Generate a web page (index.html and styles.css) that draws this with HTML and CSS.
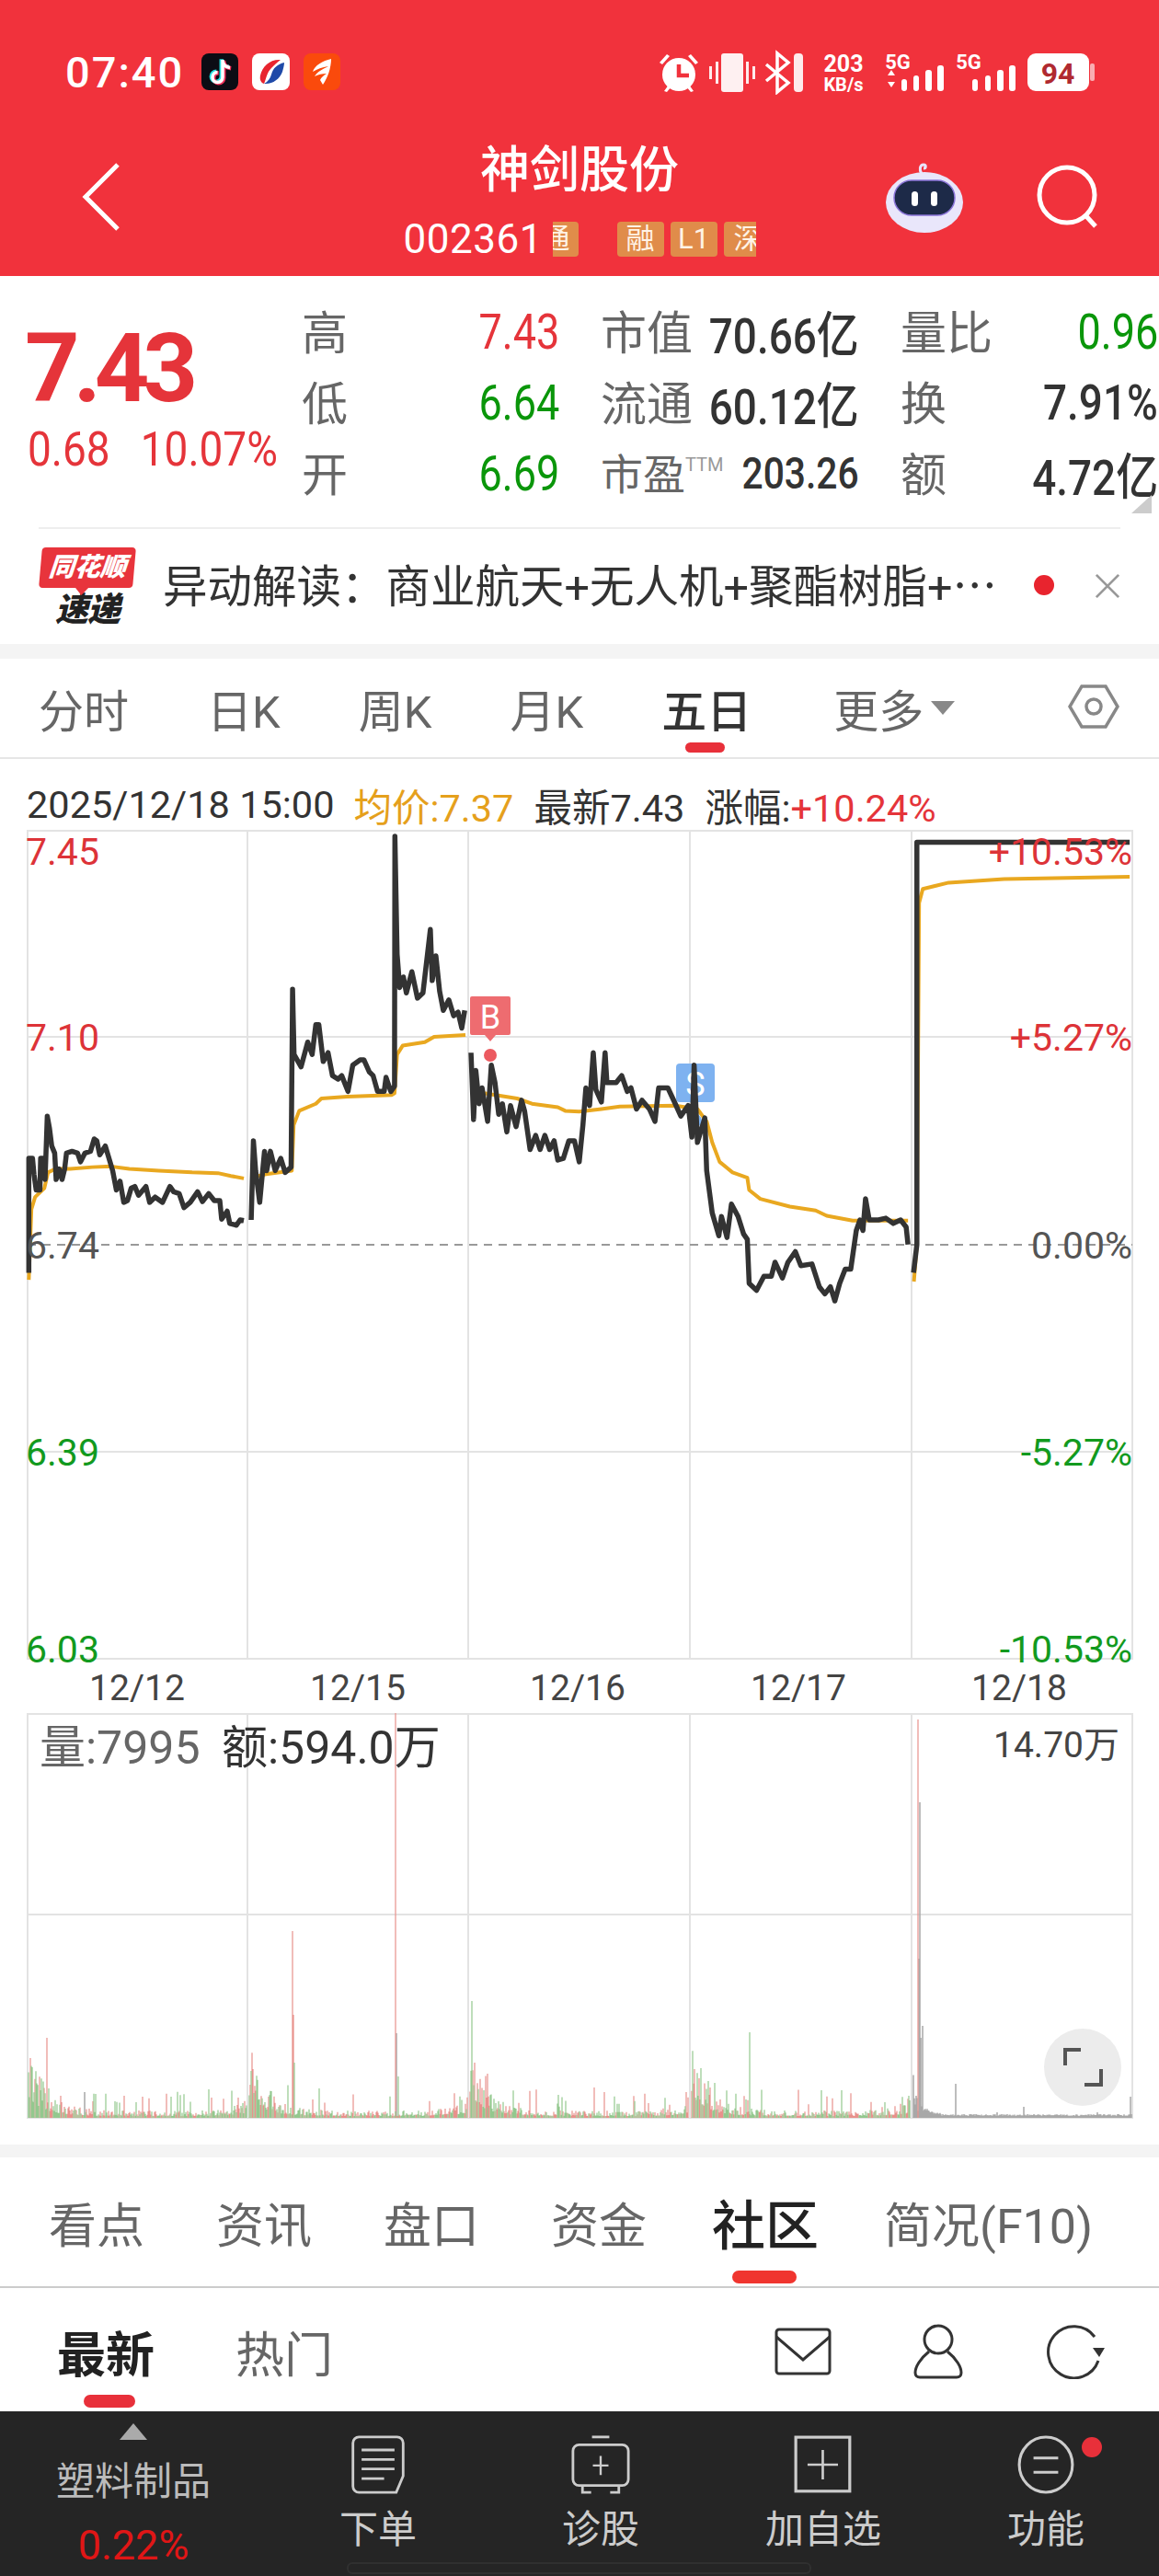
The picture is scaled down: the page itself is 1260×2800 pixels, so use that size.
FILE: index.html
```html
<!DOCTYPE html>
<html lang="zh-CN">
<head>
    <meta charset="UTF-8">
    <meta name="viewport" content="width=device-width, initial-scale=1.0">
    <title>神剑股份 002361</title>
    <link rel="stylesheet" href="styles.css">
</head>
<body>
<div class="app">

    <!-- Red header -->
    <header class="topbar">
        <div class="status">
            <div class="status-left">
                <span class="clock">07:40</span>
                <svg class="app-icon" viewBox="0 0 40 40"><rect width="40" height="40" rx="8" fill="#0c0c14"/><path d="M23 7v19a5.500 5.500 0 1 1-5.500-5.500M23 8c.5 4 3.500 7 8 7.500" fill="none" stroke="#25e0e0" stroke-width="4.500" transform="translate(-1.200 -.8)"/><path d="M23 7v19a5.500 5.500 0 1 1-5.500-5.500M23 8c.5 4 3.500 7 8 7.500" fill="none" stroke="#f0305a" stroke-width="4.500" transform="translate(1.200 .8)"/><path d="M23 7v19a5.500 5.500 0 1 1-5.500-5.500M23 8c.5 4 3.500 7 8 7.500" fill="none" stroke="#fff" stroke-width="3.500"/></svg>
                <svg class="app-icon wide" viewBox="0 0 41 40"><rect width="41" height="40" rx="8" fill="#fff"/><path d="M31 7C20 6 11 14 9 24c-1 5 1 8 4 9 3-7 3-12 8-17 3-3 6-6 10-9z" fill="#e8242e"/><path d="M35 10c-8 2-12 6-14 13-1 4-4 8-8 10 9 1 17-5 20-13 1-4 2-7 2-10z" fill="#1f4aa8"/></svg>
                <svg class="app-icon" viewBox="0 0 40 40"><rect width="40" height="40" rx="8" fill="#fa4a0c"/><path d="M30 6C21 8 12 13 10 20c5-3 10-5 17-6-6 3-12 6-15 11 4-2 8-3 13-3-3 2-6 4-7 7l3 5c5-7 9-18 9-28z" fill="#fff"/></svg>
            </div>
            <svg class="status-right" viewBox="710 52 485 50">
                <g fill="#fff">
                    <circle cx="738" cy="80" r="18"/>
                    <path d="M717 67l8-9 3 2-8 9zM759 67l-8-9-3 2 8 9zM722 98l5-7 3 2-5 6zM754 98l-5-7-3 2 5 6z"/>
                    <rect x="784" y="57" width="24" height="42" rx="3" opacity=".93"/>
                    <rect x="771" y="71" width="3" height="14" opacity=".9"/>
                    <rect x="778" y="66" width="3" height="24" opacity=".9"/>
                    <rect x="811" y="66" width="3" height="24" opacity=".9"/>
                    <rect x="818" y="71" width="3" height="14" opacity=".9"/>
                    <rect x="863" y="57" width="10" height="42" rx="4" opacity=".9"/>
                    <path d="M965 81l4-6 4 6zM965 88l4 6 4-6z"/>
                    <rect x="980" y="85" width="6" height="13" rx="3"/>
                    <rect x="993" y="81" width="6" height="17" rx="3"/>
                    <rect x="1006" y="75" width="7" height="23" rx="3"/>
                    <rect x="1019" y="70" width="7" height="28" rx="3"/>
                    <rect x="1057" y="85" width="6" height="13" rx="3"/>
                    <rect x="1071" y="81" width="6" height="17" rx="3"/>
                    <rect x="1084" y="75" width="7" height="23" rx="3"/>
                    <rect x="1097" y="70" width="7" height="28" rx="3"/>
                    <rect x="1117" y="57" width="67" height="41" rx="9"/>
                    <rect x="1185" y="68" width="5" height="19" rx="2" opacity=".6"/>
                </g>
                <path d="M738 69v12h11" fill="none" stroke="#f1323c" stroke-width="4.500"/>
                <path d="M833 69l24 20-12 10V57l12 10-24 20" fill="none" stroke="#fff" stroke-width="3.500"/>
                <text class="st-num" x="917" y="77" text-anchor="middle" font-size="25">203</text>
                <text class="st-num" x="917" y="98" text-anchor="middle" font-size="20">KB/s</text>
                <text class="st-num" x="976" y="74" text-anchor="middle" font-size="22">5G</text>
                <text class="st-num" x="1053" y="74" text-anchor="middle" font-size="22">5G</text>
                <text class="st-batt" x="1150" y="90" text-anchor="middle" font-size="32">94</text>
            </svg>
        </div>
        <div class="nav">
            <svg class="nav-back" viewBox="0 0 40 74"><path d="M38 2L3 37l35 35" fill="none" stroke="#fff" stroke-width="5"/></svg>
            <div class="nav-title">
                <div class="stock-name">神剑股份</div>
                <div class="stock-code">
                    <span class="code-num">002361</span>
                    <span class="tag tag-cut-left"><span>通</span></span>
                    <span class="tag first">融</span>
                    <span class="tag">L1</span>
                    <span class="tag tag-cut-right">深</span>
                </div>
            </div>
            <div class="nav-actions">
                <svg class="robot" viewBox="0 0 86 80">
                    <path d="M40 15c-3-4-2-10 2-10 3 0 3 4 0 4" fill="none" stroke="#e8e4ff" stroke-width="3"/>
                    <ellipse cx="43" cy="46" rx="42" ry="33" fill="#e9e6fb"/>
                    <rect x="10" y="22" width="66" height="38" rx="19" fill="#1d2a48" stroke="#8a74d8" stroke-width="1.500"/>
                    <rect x="29" y="34" width="7" height="16" rx="3.500" fill="#fff"/>
                    <rect x="50" y="34" width="7" height="16" rx="3.500" fill="#fff"/>
                </svg>
                <svg class="search" viewBox="0 0 72 72"><circle cx="34" cy="34" r="30" fill="none" stroke="#fff" stroke-width="5"/><path d="M54 56l11 12" stroke="#fff" stroke-width="5"/></svg>
            </div>
        </div>
    </header>

    <!-- Quote panel -->
    <section class="quote">
        <div class="price">
            <div class="price-big">7.43</div>
            <div class="price-sub"><span>0.68</span><span>10.07%</span></div>
        </div>
        <div class="stats">
            <div class="stat"><span class="lab">高</span><span class="val red">7.43</span></div>
            <div class="stat"><span class="lab">市值</span><span class="val dark">70.66亿</span></div>
            <div class="stat"><span class="lab">量比</span><span class="val green">0.96</span></div>
            <div class="stat"><span class="lab">低</span><span class="val green">6.64</span></div>
            <div class="stat"><span class="lab">流通</span><span class="val dark">60.12亿</span></div>
            <div class="stat"><span class="lab">换</span><span class="val dark">7.91%</span></div>
            <div class="stat"><span class="lab">开</span><span class="val green">6.69</span></div>
            <div class="stat"><span class="lab pe">市盈<small>TTM</small></span><span class="val dark pe-val">203.26</span></div>
            <div class="stat"><span class="lab">额</span><span class="val dark">4.72亿</span></div>
        </div>
        <span class="corner"></span>
    </section>
    <div class="rule"></div>

    <!-- News strip -->
    <section class="news">
        <div class="news-logo">
            <div class="logo-top">同花顺</div>
            <div class="logo-bottom">速递</div>
        </div>
        <div class="news-text">异动解读：商业航天+无人机+聚酯树脂+⋯</div>
        <span class="news-dot"></span>
        <svg class="news-close" viewBox="0 0 30 30"><path d="M2 2l26 26M28 2L2 28" stroke="#999" stroke-width="3"/></svg>
    </section>
    <div class="band"></div>

    <!-- Period tabs -->
    <nav class="periods">
        <span>分时</span>
        <span>日K</span>
        <span>周K</span>
        <span>月K</span>
        <span class="active">五日</span>
        <span class="more">更多<i></i></span>
        <svg class="hex" viewBox="0 0 56 50"><path d="M15 3h26l13 22-13 22H15L2 25z" fill="none" stroke="#888" stroke-width="3.500"/><circle cx="28" cy="25" r="8" fill="none" stroke="#888" stroke-width="3.500"/></svg>
    </nav>

    <div class="info">
        <span class="info-time">2025/12/18 15:00</span>
        <span class="info-avg">均价:7.37</span>
        <span class="info-new">最新7.43</span>
        <span class="info-rise">涨幅:<b>+10.24%</b></span>
    </div>

    <!-- Price chart, viewBox uses page coordinates -->
    <svg class="chart" viewBox="0 902 1260 960">
        <g stroke="#e3e3e3" stroke-width="2" fill="none">
            <path d="M30 903H1231V1803H30z"/>
            <path d="M30 1127H1231M30 1578H1231"/>
            <path d="M269 903V1803M509 903V1803M750 903V1803M991 903V1803"/>
        </g>
        <path d="M30 1353H1231" stroke="#999" stroke-width="2" stroke-dasharray="9 7"/>

        <rect x="735" y="1156" width="42" height="42" rx="4" fill="#7eb2f0"/>
        <text class="mark" x="756" y="1191" text-anchor="middle" font-size="36">S</text>
        <circle cx="756" cy="1218" r="7" fill="#7eb2f0"/>

        <!-- average line -->
        <g transform="translate(0 840) scale(.4016 .3827)" fill="none" stroke="#e9a820" stroke-width="4" stroke-linejoin="round">
            <path vector-effect="non-scaling-stroke" d="M78 1440L85 1240 95 1205 120 1180 130 1135 150 1125 190 1125 250 1120 300 1118 350 1125 430 1130 520 1135 590 1137 625 1145 660 1152"/>
            <path vector-effect="non-scaling-stroke" d="M680 1150L720 1140 790 1130 795 1000 810 960 855 940 870 925 940 920 1060 915 1068 910 1075 800 1090 775 1150 765 1175 750 1260 745"/>
            <path vector-effect="non-scaling-stroke" d="M1310 910L1400 925 1440 940 1510 950 1530 960 1568 962 1628 955 1678 948 1828 945 1888 955 1913 990 1928 1050 1948 1105 1983 1135 2023 1150 2028 1185 2058 1210 2138 1232 2208 1243 2238 1258 2308 1272 2458 1272"/>
            <path vector-effect="non-scaling-stroke" d="M2474 1445L2482 1340 2488 370 2498 330 2568 312 2718 302 3058 295"/>
        </g>
        <!-- price line -->
        <g transform="translate(0 840) scale(.4016 .3827)" fill="none" stroke="#333" stroke-width="5.500" stroke-linejoin="round">
            <path vector-effect="non-scaling-stroke" d="M78 1420L78 1095 88 1095 92 1140 98 1185 108 1185 110 1095 118 1095 122 1155 128 975 134 1010 140 1060 148 1080 152 1155 160 1125 168 1155 175 1125 180 1080 195 1075 210 1080 218 1105 230 1080 245 1075 255 1040 262 1045 270 1085 285 1060 295 1095 305 1130 315 1185 325 1160 335 1220 345 1215 355 1180 365 1175 375 1200 395 1175 405 1220 420 1205 440 1220 460 1175 470 1190 485 1195 498 1235 515 1220 535 1190 548 1218 565 1195 580 1215 595 1215 600 1268 615 1245 622 1280 640 1285 650 1270 660 1272"/>
            <path vector-effect="non-scaling-stroke" d="M680 1270L686 1045 692 1130 703 1220 716 1075 722 1130 732 1075 745 1130 760 1095 772 1135 788 1120 792 615 796 800 815 835 833 765 845 800 855 715 863 715 875 820 888 795 900 860 915 870 925 860 942 905 955 830 975 815 985 815 1000 850 1010 860 1022 905 1040 905 1045 865 1058 905 1068 890 1069 180 1075 515 1082 610 1092 580 1100 625 1115 565 1130 640 1145 625 1165 445 1170 590 1180 520 1190 620 1200 675 1215 645 1228 690 1240 680 1250 725 1258 675"/>
            <path vector-effect="non-scaling-stroke" d="M1275 795L1282 985 1288 845 1297 940 1305 895 1320 990 1330 830 1340 880 1350 970 1360 940 1372 1020 1382 945 1397 1005 1412 930 1420 960 1435 1070 1450 1030 1462 1070 1475 1030 1488 1070 1500 1045 1510 1100 1525 1095 1540 1045 1555 1045 1568 1105 1578 1000 1586 895 1596 945 1606 795 1613 900 1628 935 1638 795 1643 880 1668 880 1683 860 1698 905 1708 895 1723 955 1738 930 1758 955 1773 990 1783 895 1808 895 1828 940 1843 975 1863 945 1873 1035 1879 830 1888 1050 1908 980 1913 1130 1928 1250 1946 1315 1953 1260 1968 1320 1980 1225 1998 1260 2013 1310 2023 1325 2028 1450 2048 1470 2068 1430 2088 1430 2098 1390 2118 1435 2133 1390 2153 1360 2168 1400 2198 1395 2218 1460 2233 1480 2248 1460 2260 1500 2273 1450 2288 1410 2303 1410 2318 1300 2328 1270 2336 1300 2343 1210 2353 1270 2378 1270 2398 1265 2418 1280 2438 1270 2453 1290 2458 1340"/>
            <path vector-effect="non-scaling-stroke" d="M2473 1420L2482 1340 2482 197 3058 197"/>
        </g>

        <path d="M513 1083h40a2 2 0 0 1 2 2v38a2 2 0 0 1-2 2h-14l-6 7-6-7h-14a2 2 0 0 1-2-2v-38a2 2 0 0 1 2-2z" fill="#ee6c70"/>
        <text class="mark" x="533" y="1118" text-anchor="middle" font-size="36">B</text>
        <circle cx="533" cy="1147" r="7" fill="#ec5a60"/>

        <g class="axis">
            <text class="ax-red" x="28" y="940">7.45</text>
            <text class="ax-red" x="28" y="1142">7.10</text>
            <text class="ax-gray" x="28" y="1368">6.74</text>
            <text class="ax-green" x="28" y="1593">6.39</text>
            <text class="ax-green" x="28" y="1807">6.03</text>
            <text class="ax-red" x="1231" y="940" text-anchor="end">+10.53%</text>
            <text class="ax-red" x="1231" y="1142" text-anchor="end">+5.27%</text>
            <text class="ax-gray" x="1231" y="1368" text-anchor="end">0.00%</text>
            <text class="ax-green" x="1231" y="1593" text-anchor="end">-5.27%</text>
            <text class="ax-green" x="1231" y="1807" text-anchor="end">-10.53%</text>
        </g>
        <g class="dates" text-anchor="middle">
            <text x="149" y="1848">12/12</text>
            <text x="389" y="1848">12/15</text>
            <text x="628" y="1848">12/16</text>
            <text x="868" y="1848">12/17</text>
            <text x="1108" y="1848">12/18</text>
        </g>
    </svg>

    <!-- Volume chart -->
    <svg class="vol" viewBox="0 1862 1260 469">
        <g stroke="#e3e3e3" stroke-width="2" fill="none">
            <path d="M30 1863H1231V2302H30z"/>
            <path d="M30 2081H1231"/>
            <path d="M269 1863V2302M509 1863V2302M750 1863V2302M991 1863V2302"/>
        </g>
        <path id="volGray" stroke="#a8a8a8" stroke-width="1.500" fill="none"/>
        <path id="volRed" stroke="#e8918c" stroke-width="1.200" fill="none"/>
        <path id="volGreen" stroke="#93c88e" stroke-width="1.200" fill="none"/>
        <text class="vol-lab" x="43" y="1917">量:7995</text>
        <text class="vol-amt" x="241" y="1917">额:594.0万</text>
        <text class="vol-max" x="1217" y="1910" text-anchor="end">14.70万</text>
        <circle cx="1177" cy="2247" r="42" fill="#ececec"/>
        <path d="M1175 2228h-17v17M1179 2266h18v-17" fill="none" stroke="#555" stroke-width="4"/>
    </svg>
    <div class="band thin"></div>

    <!-- Content tabs -->
    <nav class="content-tabs">
        <span>看点</span>
        <span>资讯</span>
        <span>盘口</span>
        <span>资金</span>
        <span class="active">社区</span>
        <span>简况(F10)</span>
    </nav>

    <div class="sub-tabs">
        <span class="active">最新</span>
        <span>热门</span>
        <div class="sub-icons">
            <svg class="ic-mail" viewBox="0 0 62 52"><rect x="2" y="2" width="58" height="48" rx="3" fill="none" stroke="#333" stroke-width="3"/><path d="M2 10l29 25L60 10" fill="none" stroke="#333" stroke-width="3"/></svg>
            <svg class="ic-user" viewBox="0 0 56 60"><ellipse cx="28" cy="17" rx="15" ry="15" fill="none" stroke="#333" stroke-width="3"/><path d="M18 30C8 38 3 47 3 53c0 3 2 5 5 5h40c3 0 5-2 5-5 0-6-5-15-15-23" fill="none" stroke="#333" stroke-width="3"/></svg>
            <svg class="ic-refresh" viewBox="0 0 64 60"><path d="M52 14A28 28 0 1 0 56 40" fill="none" stroke="#333" stroke-width="3"/><path d="M50 26h13l-6 10z" fill="#333"/></svg>
        </div>
    </div>

    <!-- Bottom bar -->
    <footer class="bottom">
        <div class="sector">
            <i class="sector-up"></i>
            <span class="sector-name">塑料制品</span>
            <span class="sector-pct">0.22%</span>
        </div>
        <div class="cell">
            <svg viewBox="0 0 62 68"><path d="M9 2h44a7 7 0 0 1 7 7v38l-8 19H9a7 7 0 0 1-7-7V9a7 7 0 0 1 7-7z" fill="none" stroke="#ccc" stroke-width="3"/><path d="M12 17h38M12 28h38M12 39h38M12 50h26" stroke="#ccc" stroke-width="3"/></svg>
            <span>下单</span>
        </div>
        <div class="cell">
            <svg viewBox="0 0 68 68"><path d="M24 2h20" stroke="#ccc" stroke-width="3"/><rect x="2" y="11" width="64" height="47" rx="7" fill="none" stroke="#ccc" stroke-width="3"/><path d="M34 24v22M25 35h18" stroke="#ccc" stroke-width="2.500"/><path d="M13 59v7h10M55 59v7H45" stroke="#ccc" stroke-width="3" fill="none"/></svg>
            <span>诊股</span>
        </div>
        <div class="cell">
            <svg viewBox="0 0 60 60"><rect x="2" y="2" width="55" height="55" fill="none" stroke="#ccc" stroke-width="3"/><path d="M29.500 15v30M14 30h31" stroke="#ccc" stroke-width="2.500"/></svg>
            <span>加自选</span>
        </div>
        <div class="cell">
            <svg viewBox="0 0 60 62"><ellipse cx="30" cy="31" rx="28" ry="29" fill="none" stroke="#ccc" stroke-width="3"/><path d="M17 24h26M17 39h26" stroke="#ccc" stroke-width="3"/></svg>
            <span>功能</span>
            <i class="cell-dot"></i>
        </div>
        <div class="home-bar"></div>
    </footer>
</div>
<script src="chart.js"></script>
</body>
</html>
```

FILE: styles.css
```css
body {
    margin: 0;
    background: #fff;
    font-family: Roboto, "Noto Sans CJK SC", sans-serif;
    color: #333;
}
.app {
    width: 1260px;
    height: 2800px;
    overflow: hidden;
}

/* header */
.topbar {
    height: 300px;
    background: #f1323c;
    color: #fff;
}
.status {
    height: 152px;
    box-sizing: border-box;
    padding: 4px 0 0 71px;
    display: flex;
    align-items: center;
    justify-content: space-between;
}
.status-left {
    display: flex;
    align-items: center;
}
.clock {
    font-size: 47px;
    letter-spacing: 2px;
    font-weight: 500;
    width: 148px;
}
.app-icon {
    width: 40px;
    height: 40px;
    margin-right: 15px;
}
.app-icon.wide {
    width: 41px;
}
.status-right {
    width: 485px;
    height: 50px;
    margin-right: 65px;
}
.st-num {
    fill: #fff;
    font-weight: 700;
}
.st-batt {
    fill: #b02a30;
    font-weight: 700;
}
.nav {
    display: grid;
    grid-template-columns: 1fr auto 1fr;
    align-items: center;
    height: 130px;
}
.nav-back {
    width: 42px;
    height: 74px;
    margin: -6px 0 0 89px;
}
.nav-title {
    text-align: center;
}
.stock-name {
    font-size: 54px;
    line-height: 68px;
    font-weight: 500;
}
.stock-code {
    display: flex;
    align-items: center;
    margin-top: 18px;
    height: 44px;
}
.code-num {
    width: 146px;
    font-size: 44px;
    letter-spacing: 0.5px;
    margin-right: 16px;
}
.tag {
    width: 51px;
    height: 38px;
    line-height: 38px;
    background: #e08c4a;
    border-radius: 4px;
    font-size: 31px;
    text-align: center;
    margin-right: 7px;
    color: #fff3e6;
    overflow: hidden;
}
.tag.first {
    margin-left: 35px;
}
.tag-cut-left {
    width: 28px;
    border-radius: 0 4px 4px 0;
    margin-right: 7px;
    position: relative;
}
.tag-cut-left span {
    position: absolute;
    right: 9px;
    top: 0;
}
.tag-cut-right {
    width: 35px;
    border-radius: 4px 0 0 4px;
    margin-right: 0;
    text-align: left;
    text-indent: 11px;
    white-space: nowrap;
}
.nav-actions {
    display: flex;
    align-items: center;
    justify-content: flex-end;
    margin-top: -6px;
}
.robot {
    width: 86px;
    height: 80px;
}
.search {
    width: 72px;
    height: 72px;
    margin: 0 62px 0 78px;
}

/* quote */
.quote {
    display: flex;
    height: 273px;
    box-sizing: border-box;
    position: relative;
}
.price {
    width: 328px;
    box-sizing: border-box;
    padding: 46px 0 0 32px;
    flex-shrink: 0;
}
.price-big {
    color: #e5343a;
    font-size: 104px;
    line-height: 110px;
    font-weight: 700;
    letter-spacing: -7px;
    margin-left: -5px;
}
.price-sub {
    display: flex;
    gap: 33px;
    color: #e5343a;
    font-size: 46px;
    line-height: 54px;
    margin: 5px 0 0 -2px;
    transform: scaleY(1.12);
}
.stats {
    display: grid;
    grid-template-columns: 280px 281px 280px;
    column-gap: 45px;
    grid-auto-rows: 77px;
    padding-top: 21px;
}
.stat {
    display: flex;
    align-items: center;
    justify-content: space-between;
}
.lab {
    color: #666;
    font-size: 50px;
    padding-bottom: 4px;
    white-space: nowrap;
}
/* the app's digits are tall and narrow, margin takes back the width scaleX leaves */
.val {
    font-size: 53px;
    padding-top: 2px;
    margin-left: -40px;
    transform: scaleX(.85);
    transform-origin: right center;
    white-space: nowrap;
}
.val.dark {
    font-weight: 500;
    color: #333;
    font-size: 54px;
}
.red {
    color: #e5343a;
}
.green {
    color: #0a960a;
}
.lab.pe {
    font-size: 46px;
    display: flex;
    align-items: flex-start;
}
.lab.pe small {
    font-size: 20px;
    color: #999;
    margin-top: 14px;
}
.val.pe-val {
    font-size: 48px;
}
.corner {
    position: absolute;
    right: 8px;
    top: 238px;
    border-style: solid;
    border-width: 0 0 20px 22px;
    border-color: transparent transparent #ccc transparent;
}
.rule {
    height: 2px;
    margin: 0 42px;
    background: #eee;
}

/* news */
.news {
    display: flex;
    align-items: center;
    height: 125px;
    padding-left: 44px;
}
.news-logo {
    width: 102px;
    text-align: center;
    font-style: italic;
    font-weight: 900;
    flex-shrink: 0;
}
.logo-top {
    position: relative;
    height: 44px;
    line-height: 44px;
    background: #e8343c;
    color: #fff;
    font-size: 28px;
    border-radius: 4px;
    transform: skewX(-5deg);
    white-space: nowrap;
}
.logo-top::after {
    content: "";
    position: absolute;
    left: 40px;
    top: 44px;
    border-style: solid;
    border-width: 8px 7px 0 7px;
    border-color: #e8343c transparent transparent transparent;
}
.logo-bottom {
    font-size: 36px;
    line-height: 36px;
    margin-top: 6px;
    color: #222;
    letter-spacing: -1px;
}
.news-text {
    font-size: 48.500px;
    color: #333;
    margin: -8px 0 0 31px;
    width: 947px;
    white-space: nowrap;
    flex-shrink: 0;
}
.news-dot {
    width: 22px;
    height: 22px;
    border-radius: 50%;
    background: #e8242e;
    margin: -4px 0 0 0;
    flex-shrink: 0;
}
.news-close {
    width: 28px;
    height: 28px;
    margin: -2px 0 0 44px;
    flex-shrink: 0;
}
.band {
    height: 16px;
    background: #f4f4f4;
}
.band.thin {
    height: 14px;
}

/* period tabs */
.periods {
    position: relative;
    height: 109px;
    box-sizing: border-box;
    display: flex;
    align-items: center;
    gap: 85px;
    padding: 0 0 0 42px;
    border-bottom: 2px solid #e6e6e6;
    font-size: 49px;
    color: #666;
}
.periods .active {
    position: relative;
    color: #333;
    font-weight: 500;
}
.periods .active::after {
    content: "";
    position: absolute;
    left: 26px;
    top: 73px;
    width: 43px;
    height: 11px;
    background: #e8303a;
    border-radius: 6px;
}
.more {
    display: flex;
    align-items: center;
    margin-left: 4px;
}
.more i {
    margin-left: 8px;
    border-style: solid;
    border-width: 15px 13px 0 13px;
    border-color: #888 transparent transparent transparent;
}
.hex {
    position: absolute;
    right: 43px;
    top: 27px;
    width: 56px;
    height: 50px;
}
.info {
    height: 77px;
    box-sizing: border-box;
    padding: 22px 0 0 29px;
    display: flex;
    align-items: center;
    font-size: 41.500px;
    white-space: nowrap;
}
.info-avg {
    color: #e5a01c;
    margin-left: 21px;
}
.info-new {
    margin-left: 22px;
}
.info-rise {
    margin-left: 22px;
}
.info-rise b {
    font-weight: 400;
    color: #e5343a;
}

/* charts */
.chart,
.vol {
    display: block;
    width: 1260px;
}
.chart {
    height: 960px;
}
.vol {
    height: 469px;
}
.mark {
    fill: #fff;
}
.axis text {
    font-size: 41px;
}
.ax-red {
    fill: #dd3338;
}
.ax-gray {
    fill: #555;
}
.ax-green {
    fill: #129a1e;
}
.dates text {
    font-size: 39px;
    fill: #444;
}
.vol-lab {
    font-size: 50px;
    fill: #666;
}
.vol-amt {
    font-size: 50px;
    fill: #333;
}
.vol-max {
    font-size: 39px;
    fill: #444;
}

/* lower tabs */
.content-tabs {
    height: 142px;
    box-sizing: border-box;
    display: flex;
    align-items: center;
    gap: 78px;
    padding: 0 0 0 53px;
    border-bottom: 2px solid #ccc;
    font-size: 52px;
    color: #666;
    white-space: nowrap;
}
.content-tabs .active {
    position: relative;
    font-size: 58px;
    font-weight: 500;
    color: #222;
    margin: 0 -7px;
}
.content-tabs .active::after {
    content: "";
    position: absolute;
    left: 22px;
    top: 95px;
    width: 70px;
    height: 14px;
    background: #f0352f;
    border-radius: 7px;
}
.sub-tabs {
    height: 134px;
    box-sizing: border-box;
    display: flex;
    align-items: center;
    gap: 88px;
    padding: 4px 58px 0 62px;
    font-size: 53px;
    color: #666;
    white-space: nowrap;
}
.sub-tabs .active {
    position: relative;
    font-weight: 700;
    color: #222;
}
.sub-tabs .active::after {
    content: "";
    position: absolute;
    left: 29px;
    top: 85px;
    width: 56px;
    height: 14px;
    background: #e8303a;
    border-radius: 7px;
}
.sub-icons {
    display: flex;
    align-items: center;
    margin-left: auto;
}
.ic-mail {
    width: 62px;
    height: 52px;
}
.ic-user {
    width: 56px;
    height: 60px;
    margin-left: 88px;
}
.ic-refresh {
    width: 64px;
    height: 60px;
    margin-left: 90px;
}

/* bottom bar */
.bottom {
    position: relative;
    height: 179px;
    display: flex;
    background: #252525;
    color: #ccc;
}
.sector {
    width: 290px;
    flex-shrink: 0;
    display: flex;
    flex-direction: column;
    align-items: center;
    font-size: 42px;
}
.sector-up {
    margin-top: 13px;
    border-style: solid;
    border-width: 0 15px 18px 15px;
    border-color: transparent transparent #aaa transparent;
}
.sector-name {
    margin-top: 16px;
    line-height: 60px;
    color: #bbb;
}
.sector-pct {
    margin-top: 14px;
    line-height: 50px;
    color: #e01616;
    font-size: 45px;
}
.cell {
    position: relative;
    width: 242px;
    display: flex;
    flex-direction: column;
    align-items: center;
    font-size: 42px;
    padding-top: 26px;
}
.cell svg {
    height: 64px;
    width: 64px;
}
.cell span {
    line-height: 50px;
    margin-top: 14px;
}
.cell-dot {
    position: absolute;
    left: 160px;
    top: 28px;
    width: 22px;
    height: 22px;
    border-radius: 50%;
    background: #e8303a;
}
.home-bar {
    position: absolute;
    left: 377px;
    top: 164px;
    width: 505px;
    height: 13px;
    box-sizing: border-box;
    border: 2px solid #303030;
    border-radius: 6px;
}
```

FILE: chart.js
```js
// Volume bars of the five day chart, one pixel per minute
var base = 2302;
var dayStart = [31, 271, 511, 752, 993];
var seed = 20251218;

function rnd() {
    seed = (seed * 1664525 + 1013904223) % 4294967296;
    return seed / 4294967296;
}

var paths = { red: "", green: "", gray: "" };

function bar(color, x, h) {
    paths[color] += "M" + x + " " + base + "V" + (base - h);
}

for (var d = 0; d < 5; d++) {
    for (var i = 0; i < 238; i++) {
        var x = dayStart[d] + i;
        if (d == 4) {
            bar("gray", x, i < 30 ? 4 + 45 * Math.exp(-i / 8) * rnd() : 2 + rnd() * 2);
            continue;
        }
        var h = 5 + 50 * Math.exp(-i / 18) + 10 * Math.exp((i - 238) / 14);
        var r = rnd();
        h = h * (0.4 + r * r * 1.2) + (rnd() > 0.93 ? 8 + rnd() * 16 : 0);
        bar(rnd() > 0.5 ? "red" : "green", x, h);
    }
}

// the tall spikes, read off the reference
var spikes = [
    ["red", 33, 65], ["green", 35, 55], ["red", 51, 87], ["gray", 92, 28],
    ["green", 125, 18], ["green", 148, 17],
    ["red", 275, 53], ["red", 318, 203], ["red", 319, 112], ["green", 320, 60], ["green", 347, 32],
    ["red", 430, 440], ["gray", 431, 92], ["green", 433, 45],
    ["green", 513, 127], ["red", 516, 60], ["red", 530, 48], ["green", 607, 25],
    ["red", 646, 33], ["red", 657, 28],
    ["red", 755, 53], ["green", 770, 40], ["green", 777, 38], ["green", 815, 93], ["green", 893, 30],
    ["red", 998, 433], ["gray", 1000, 343], ["gray", 999, 173], ["gray", 1003, 100], ["gray", 1001, 87],
    ["gray", 1039, 37], ["gray", 1084, 6], ["gray", 1113, 12], ["gray", 1193, 6], ["gray", 1229, 23]
];
for (var s = 0; s < spikes.length; s++) {
    bar(spikes[s][0], spikes[s][1], spikes[s][2]);
}

document.getElementById("volRed").setAttribute("d", paths.red);
document.getElementById("volGreen").setAttribute("d", paths.green);
document.getElementById("volGray").setAttribute("d", paths.gray);
```
